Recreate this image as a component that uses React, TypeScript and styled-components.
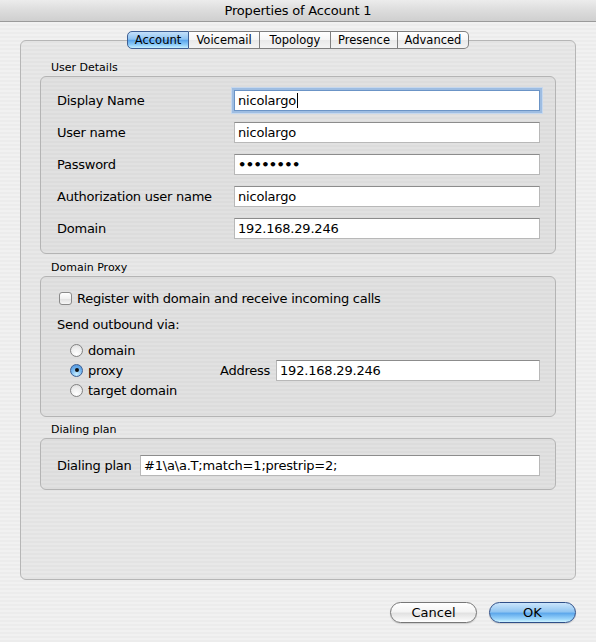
import React from "react"
import styled, { createGlobalStyle, css } from "styled-components"

const GlobalStyle = createGlobalStyle`
  html, body {
    margin: 0;
    padding: 0;
  }
  body {
    font-family: "DejaVu Sans", "Liberation Sans", sans-serif;
    color: #000;
  }
`

const stripes = (a: string, b: string) => css`
  background: repeating-linear-gradient(to bottom, ${a} 0px, ${a} 2px, ${b} 2px, ${b} 4px);
`

const Window = styled.div`
  width: 596px;
  height: 642px;
  display: flex;
  flex-direction: column;
  ${stripes("#ececec", "#f1f1f1")}
  overflow: hidden;
`

const TitleBar = styled.div`
  height: 21px;
  flex-shrink: 0;
  display: flex;
  align-items: center;
  justify-content: center;
  font-size: 13px;
  letter-spacing: -0.2px;
  background: linear-gradient(to bottom, #ececec 0%, #dcdcdc 50%, #cfcfcf 100%);
  border-bottom: 1px solid #9a9a9a;
`

const Body = styled.div`
  flex: 1;
  display: flex;
  flex-direction: column;
  padding: 18px 20px 0 20px;
`

const Panel = styled.div`
  height: 540px;
  box-sizing: border-box;
  border: 1px solid #b6b6b6;
  border-radius: 6px;
  ${stripes("#e3e3e3", "#e8e8e8")}
  display: flex;
  flex-direction: column;
  padding: 0 19px;
`

const TabRow = styled.div`
  display: flex;
  justify-content: center;
  margin-top: -10px;
`

const Tab = styled.div<{ $active?: boolean; $first?: boolean; $last?: boolean }>`
  height: 18px;
  box-sizing: border-box;
  display: flex;
  align-items: center;
  justify-content: center;
  font-size: 11.5px;
  border: 1px solid #7f7f7f;
  border-left-width: ${p => (p.$first ? "1px" : "0")};
  background: linear-gradient(to bottom, #ffffff 0%, #f6f6f6 50%, #e9e9e9 52%, #f4f4f4 100%);
  ${p => p.$first && css`border-radius: 5px 0 0 5px;`}
  ${p => p.$last && css`border-radius: 0 5px 5px 0;`}
  ${p => p.$active && css`
    background: linear-gradient(to bottom, #c4e0fa 0%, #8ec3f2 45%, #5aa5ec 52%, #8ecdf9 80%, #c7f0ff 100%);
    border-color: #3f5f93;
  `}
`

const SectionLabel = styled.div<{ $gap: number }>`
  font-size: 11px;
  line-height: 13px;
  margin: ${p => p.$gap}px 0 2px 11px;
`

const GroupBox = styled.div`
  border: 1px solid #b4b4b4;
  border-radius: 6px;
  ${stripes("#dcdcdc", "#e1e1e1")}
  box-sizing: border-box;
  display: flex;
  flex-direction: column;
`

const FieldList = styled.div`
  display: flex;
  flex-direction: column;
  gap: 11px;
  padding: 13px 15px 14px 16px;
`

const FieldRow = styled.div`
  display: flex;
  align-items: center;
`

const FieldLabel = styled.div<{ $width?: number }>`
  ${p => p.$width && css`width: ${p.$width}px;`}
  flex-shrink: 0;
  white-space: nowrap;
  font-size: 13px;
  letter-spacing: -0.25px;
`

const Input = styled.div<{ $focused?: boolean }>`
  flex: 1;
  height: 21px;
  box-sizing: border-box;
  background: #fff;
  border: 1px solid #b8b8b8;
  border-top-color: #8c8c8c;
  display: flex;
  align-items: center;
  padding-left: 3px;
  font-size: 13px;
  letter-spacing: -0.2px;
  white-space: nowrap;
  overflow: hidden;
  ${p => p.$focused && css`
    border-color: #6b94c6;
    box-shadow: 0 0 0 2px #9ebde2, 0 0 0 3px #c6d8ee;
  `}
`

const Caret = styled.span`
  display: inline-block;
  width: 1px;
  height: 15px;
  background: #000;
  margin-left: 1px;
`

const Dots = styled.span`
  font-size: 13px;
  font-weight: bold;
  letter-spacing: -0.6px;
  line-height: 1;
`

const ProxyBody = styled.div`
  display: flex;
  flex-direction: column;
  padding: 14px 15px 16px 16px;
`

const CheckRow = styled.label`
  display: flex;
  align-items: center;
  gap: 5px;
  font-size: 13px;
  letter-spacing: -0.25px;
`

const CheckBox = styled.span`
  width: 13px;
  height: 13px;
  box-sizing: border-box;
  border: 1px solid #8a8a8a;
  border-radius: 3px;
  background: linear-gradient(to bottom, #ffffff 0%, #f0f0f0 50%, #e0e0e0 52%, #f6f6f6 100%);
  margin-left: 2px;
`

const SendLabel = styled.div`
  font-size: 13px;
  letter-spacing: -0.25px;
  margin-top: 11px;
`

const RadioArea = styled.div`
  display: flex;
  align-items: center;
  margin-top: 8px;
  padding-left: 13px;
`

const RadioList = styled.div`
  display: flex;
  flex-direction: column;
  width: 150px;
`

const RadioRow = styled.div`
  display: flex;
  align-items: center;
  height: 20px;
  gap: 5px;
  font-size: 13px;
  letter-spacing: -0.25px;
`

const Radio = styled.span<{ $on?: boolean }>`
  width: 13px;
  height: 13px;
  box-sizing: border-box;
  border-radius: 50%;
  border: 1px solid #828282;
  background: radial-gradient(circle at 50% 80%, #ffffff 0%, #ececec 60%, #d8d8d8 100%);
  display: flex;
  align-items: center;
  justify-content: center;
  ${p => p.$on && css`
    border-color: #3c5e92;
    background: radial-gradient(circle at 50% 85%, #c8efff 0%, #6eb2ee 55%, #4d8fd8 100%);
    &::after {
      content: "";
      width: 4px;
      height: 4px;
      border-radius: 50%;
      background: #111;
    }
  `}
`

const AddressRow = styled.div`
  flex: 1;
  display: flex;
  align-items: center;
  gap: 6px;
  font-size: 13px;
  letter-spacing: -0.25px;
`

const DialBody = styled.div`
  display: flex;
  align-items: center;
  padding: 16px 15px 13px 16px;
  gap: 8px;
`

const Footer = styled.div`
  flex: 1;
  display: flex;
  justify-content: flex-end;
  align-items: center;
  gap: 12px;
  padding-top: 3px;
`

const PushButton = styled.div<{ $primary?: boolean }>`
  width: 87px;
  height: 21px;
  box-sizing: border-box;
  border-radius: 11px;
  border: 1px solid #777;
  display: flex;
  align-items: center;
  justify-content: center;
  font-size: 13px;
  background: linear-gradient(to bottom, #ffffff 0%, #f4f4f4 45%, #e2e2e2 55%, #f4f4f4 85%, #ffffff 100%);
  box-shadow: 0 1px 1px rgba(0, 0, 0, 0.15);
  ${p => p.$primary && css`
    border-color: #2f4f88;
    background: linear-gradient(to bottom, #cbe5fb 0%, #92c6f2 45%, #5fa9ec 55%, #9cd6fb 85%, #cff4ff 100%);
  `}
`

const tabs = ["Account", "Voicemail", "Topology", "Presence", "Advanced"]
const tabWidths = [62, 71, 71, 67, 71]

const userFields = [
  { label: "Display Name", value: "nicolargo", focused: true },
  { label: "User name", value: "nicolargo" },
  { label: "Password", value: "", secret: true },
  { label: "Authorization user name", value: "nicolargo" },
  { label: "Domain", value: "192.168.29.246" },
]

export default function App() {
  return (
    <>
      <GlobalStyle />
      <Window>
        <TitleBar>Properties of Account 1</TitleBar>
        <Body>
          <Panel>
            <TabRow>
              {tabs.map((t, i) => (
                <Tab
                  key={t}
                  $active={i === 0}
                  $first={i === 0}
                  $last={i === tabs.length - 1}
                  style={{ width: tabWidths[i] }}
                >
                  {t}
                </Tab>
              ))}
            </TabRow>

            <SectionLabel $gap={12}>User Details</SectionLabel>
            <GroupBox>
              <FieldList>
                {userFields.map(f => (
                  <FieldRow key={f.label}>
                    <FieldLabel $width={177}>{f.label}</FieldLabel>
                    <Input $focused={f.focused}>
                      {f.secret ? <Dots>••••••••</Dots> : f.value}
                      {f.focused && <Caret />}
                    </Input>
                  </FieldRow>
                ))}
              </FieldList>
            </GroupBox>

            <SectionLabel $gap={7}>Domain Proxy</SectionLabel>
            <GroupBox>
              <ProxyBody>
                <CheckRow>
                  <CheckBox />
                  Register with domain and receive incoming calls
                </CheckRow>
                <SendLabel>Send outbound via:</SendLabel>
                <RadioArea>
                  <RadioList>
                    <RadioRow><Radio />domain</RadioRow>
                    <RadioRow><Radio $on />proxy</RadioRow>
                    <RadioRow><Radio />target domain</RadioRow>
                  </RadioList>
                  <AddressRow>
                    Address
                    <Input>192.168.29.246</Input>
                  </AddressRow>
                </RadioArea>
              </ProxyBody>
            </GroupBox>

            <SectionLabel $gap={6}>Dialing plan</SectionLabel>
            <GroupBox>
              <DialBody>
                <FieldLabel $width={75}>Dialing plan</FieldLabel>
                <Input>#1\a\a.T;match=1;prestrip=2;</Input>
              </DialBody>
            </GroupBox>
          </Panel>
          <Footer>
            <PushButton>Cancel</PushButton>
            <PushButton $primary>OK</PushButton>
          </Footer>
        </Body>
      </Window>
    </>
  )
}
